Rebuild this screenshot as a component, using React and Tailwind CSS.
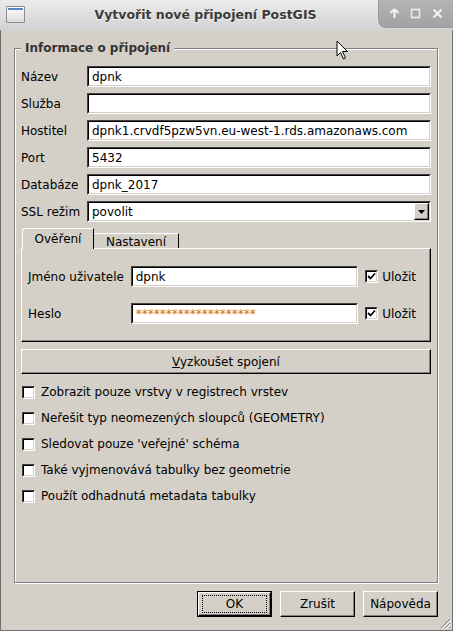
import { useState } from 'react'

function Sunken({ children, className = '' }) {
  return (
    <div className={`h-[21px] bg-white border border-t-[#404040] border-l-[#404040] border-r-white border-b-white ${className}`}>
      <div className="h-full border border-t-black border-l-black border-r-[#d4d0c8] border-b-[#d4d0c8] flex items-center px-[3px] overflow-hidden whitespace-nowrap">
        {children}
      </div>
    </div>
  )
}

function Check({ checked }) {
  return (
    <div className="w-[13px] h-[13px] shrink-0 bg-white border border-t-[#404040] border-l-[#404040] border-r-white border-b-white">
      <div className="w-full h-full border border-t-black border-l-black border-r-[#d4d0c8] border-b-[#d4d0c8] flex items-center justify-center">
        {checked && (
          <svg width="9" height="9" viewBox="0 0 9 9">
            <path d="M1 4 L3.5 6.5 L8 1.5" stroke="#000" strokeWidth="1.8" fill="none" />
          </svg>
        )}
      </div>
    </div>
  )
}

function Button({ children, isDefault, className = '' }) {
  const inner = (
    <div className="h-full w-full flex items-center justify-center border border-t-white border-l-white border-r-black border-b-black shadow-[inset_-1px_-1px_0_#808080]">
      {isDefault ? (
        <span className="h-[18px] w-[65px] border border-dotted border-black flex items-center justify-center">{children}</span>
      ) : children}
    </div>
  )
  if (isDefault) {
    return <div className={`h-[26px] w-[75px] border border-black ${className}`}>{inner}</div>
  }
  return <div className={`h-[26px] w-[75px] ${className}`}>{inner}</div>
}

export default function App() {
  const [options] = useState([
    'Zobrazit pouze vrstvy v registrech vrstev',
    'Neřešit typ neomezených sloupců (GEOMETRY)',
    "Sledovat pouze 'veřejné' schéma",
    'Také vyjmenovává tabulky bez geometrie',
    'Použít odhadnutá metadata tabulky',
  ])

  const fields = [
    ['Název', 'dpnk'],
    ['Služba', ''],
    ['Hostitel', 'dpnk1.crvdf5pzw5vn.eu-west-1.rds.amazonaws.com'],
    ['Port', '5432'],
    ['Databáze', 'dpnk_2017'],
  ]

  return (
    <div className="relative w-[453px] h-[631px] flex flex-col bg-[#d4d0c8] text-[12px] text-black font-['DejaVu_Sans',sans-serif] overflow-hidden">
      {/* title bar */}
      <div className="h-[30px] shrink-0 flex items-start bg-linear-to-b from-[#ebebeb] to-[#d3d3d3]">
        <div className="mt-[6px] ml-[6px] w-[19px] h-[17px] border border-[#8c8c8c] bg-linear-to-b from-white to-[#dcdcdc] rounded-[1px]">
          <div className="h-[2px] mt-[1px] mx-[1px] bg-[#5b86c4]" />
        </div>
        <div className="flex-1 h-[30px] flex items-center justify-center pl-[8px] font-bold text-[12.5px] text-[#3a3a3a] [text-shadow:0_1px_0_rgba(255,255,255,0.7)]">
          Vytvořit nové připojení PostGIS
        </div>
        <div className="w-[75px] h-[28px] rounded-bl-[8px] bg-linear-to-b from-[#b4b4b4] to-[#a2a2a2] border-l border-b border-[#9a9a9a] flex items-center justify-around px-[5px]">
          <svg width="11" height="11" viewBox="0 0 11 11">
            <path d="M5.5 1 L1.5 5 M5.5 1 L9.5 5 M5.5 1.5 L5.5 10" stroke="#f2f2f2" strokeWidth="2.2" fill="none" />
          </svg>
          <svg width="11" height="11" viewBox="0 0 11 11">
            <rect x="1.5" y="1.5" width="8" height="8" stroke="#eeeeee" strokeWidth="1.6" fill="#a8a8a8" />
          </svg>
          <svg width="11" height="11" viewBox="0 0 11 11">
            <path d="M1.5 1.5 L9.5 9.5 M9.5 1.5 L1.5 9.5" stroke="#f2f2f2" strokeWidth="2.2" fill="none" />
          </svg>
        </div>
      </div>

      {/* body */}
      <div className="flex-1 flex flex-col border-x border-b border-[#6f6f6f] pl-[13px] pr-[14px] pt-[11px] pb-[13px]">
        <fieldset className="flex-1 border border-[#808080] shadow-[inset_1px_1px_0_#fff,1px_1px_0_#fff] px-[6px] min-w-0">
          <legend className="px-[4px] font-bold text-[#333] leading-[14px] bg-[#d4d0c8]">Informace o připojení</legend>
          <div className="pt-[11px] flex flex-col">
            <div className="grid grid-cols-[66px_1fr] gap-y-[6px] items-center">
              {fields.map(([label, value]) => (
                <div key={label} className="contents">
                  <span>{label}</span>
                  <Sunken>{value}</Sunken>
                </div>
              ))}
              <span>SSL režim</span>
              <div className="h-[21px] bg-white border border-t-[#404040] border-l-[#404040] border-r-white border-b-white">
                <div className="h-full border border-t-black border-l-black border-r-[#d4d0c8] border-b-[#d4d0c8] flex items-center pl-[3px]">
                  <span className="flex-1">povolit</span>
                  <div className="w-[15px] h-[17px] flex items-center justify-center border border-t-white border-l-white border-r-black border-b-black shadow-[inset_-1px_-1px_0_#808080] bg-[#d4d0c8]">
                    <svg width="7" height="4" viewBox="0 0 7 4"><path d="M0 0 H7 L3.5 4 Z" fill="#000" /></svg>
                  </div>
                </div>
              </div>
            </div>

            {/* tabs */}
            <div className="mt-[6px] flex items-end h-[21px] -mb-[1px] pl-[1px] relative z-10">
              <div className="h-[21px] w-[72px] bg-[#d4d0c8] border-t border-l border-white border-r border-r-black rounded-tl-[3px] flex items-center justify-center pb-[1px]">
                Ověření
              </div>
              <div className="h-[15px] mb-[1px] w-[85px] border-t border-white border-r border-r-black flex items-center justify-center pt-[2px]">
                Nastavení
              </div>
            </div>
            <div className="h-[94px] border border-t-white border-l-white border-r-black border-b-black shadow-[inset_-1px_-1px_0_#808080] pl-[6px] pr-[14px] pt-[17px] flex flex-col gap-[16px]">
              <div className="flex items-center">
                <span className="w-[103px]">Jméno uživatele</span>
                <Sunken className="w-[228px]">dpnk</Sunken>
                <div className="ml-[7px] flex items-center gap-[4px]">
                  <Check checked />
                  <span>Uložit</span>
                </div>
              </div>
              <div className="flex items-center">
                <span className="w-[103px]">Heslo</span>
                <Sunken className="w-[228px]">
                  <span className="text-[#b8721c]">********************</span>
                </Sunken>
                <div className="ml-[7px] flex items-center gap-[4px]">
                  <Check checked />
                  <span>Uložit</span>
                </div>
              </div>
            </div>

            <div className="mt-[7px] h-[25px] border border-t-white border-l-white border-r-black border-b-black shadow-[inset_-1px_-1px_0_#808080] flex items-center justify-center">
              <span><span className="underline">V</span>yzkoušet spojení</span>
            </div>

            <div className="mt-[5px] flex flex-col">
              {options.map((o) => (
                <div key={o} className="h-[26px] flex items-center gap-[6px] pl-[1px]">
                  <Check />
                  <span>{o}</span>
                </div>
              ))}
            </div>
          </div>
        </fieldset>

        <div className="mt-[8px] flex justify-end gap-[8px]">
          <Button isDefault>OK</Button>
          <Button>Zrušit</Button>
          <Button>Nápověda</Button>
        </div>
      </div>

      {/* mouse pointer */}
      <svg className="absolute left-[336px] top-[40px]" width="14" height="21" viewBox="0 0 14 21">
        <path d="M1 1 L1 16 L4.5 12.5 L7.5 19 L9.5 18 L6.5 11.5 L11.5 11.5 Z" fill="#fff" stroke="#000" strokeWidth="1" />
      </svg>

      {/* resize grip */}
      <svg className="absolute right-[2px] bottom-[2px]" width="12" height="12" viewBox="0 0 12 12">
        <path d="M11 2 L2 11 M11 6 L6 11 M11 10 L10 11" stroke="#808080" strokeWidth="1" />
        <path d="M12 3 L3 12 M12 7 L7 12" stroke="#fff" strokeWidth="1" />
      </svg>
    </div>
  )
}
